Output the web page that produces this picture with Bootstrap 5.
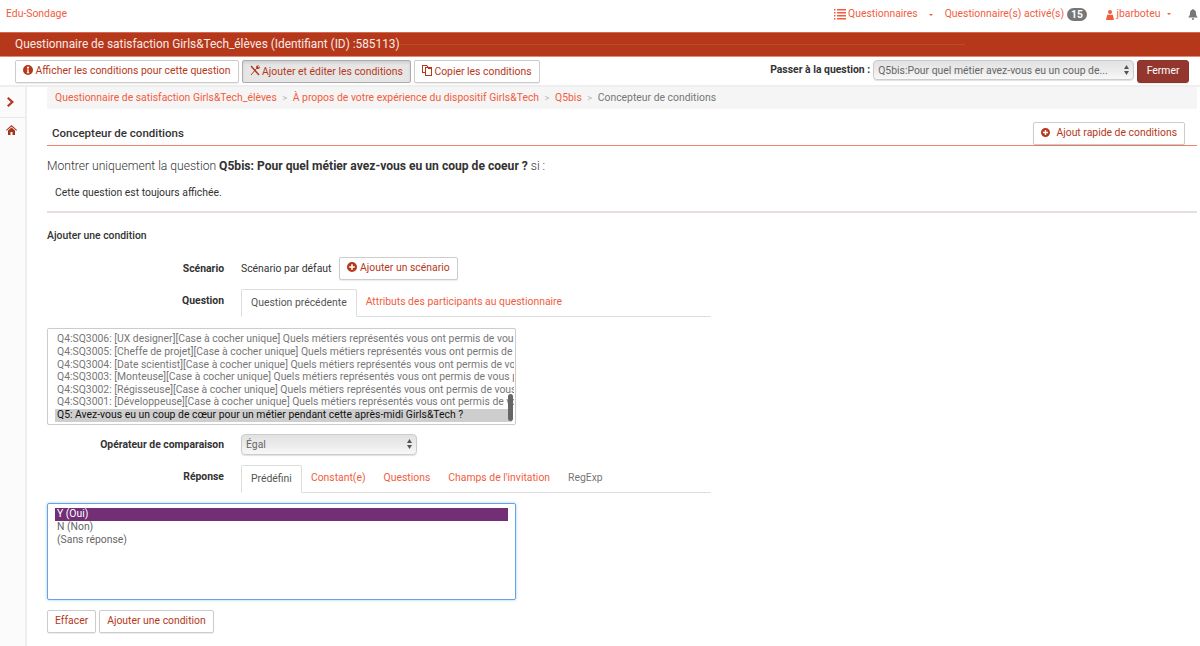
<!DOCTYPE html>
<html lang="fr">
<head>
  <meta charset="UTF-8" />
  <meta name="viewport" content="width=device-width, initial-scale=1.0"/>
  <title>Edu-Sondage - Concepteur de conditions</title>
  <link href="https://cdn.jsdelivr.net/npm/bootstrap@5.3.0/dist/css/bootstrap.min.css" rel="stylesheet"/>
  <style>
    html, body { height: 100%; overflow: hidden; }
    body { font-family: Roboto, "Liberation Sans", sans-serif; font-size: 10.4px; color: #333; background: #fff; line-height: 1.2; }
    a { text-decoration: none; color: #f25c3e; }
    svg { display: inline-block; fill: currentColor; }

    .top-bar { height: 32px; padding: 0 2px 3px 6px; }
    .top-bar a { color: #f25c3e; }
    .top-caret { width: 0; height: 0; border: 2.5px solid transparent; border-top-color: #f25c3e; border-bottom: 0; display: inline-block; vertical-align: 2px; }
    .menu-caret { margin: 0 12px 0 11px; }
    .count-pill { background: #777; color: #fff; font-weight: 700; font-size: 10.4px; border-radius: 7px; padding: 1px 4px; line-height: 11px; margin: 0 19px 0 3px; }
    .bell { color: #777; margin-left: 17px; }

    .title-bar { height: 25px; background: #b5381a; border-top: 1px solid #d9694e; border-bottom: 1px solid #e08a75; color: #fbe9e4; font-size: 11.85px; padding-left: 15px; }
    .title-line { width: 565px; border-top: 1px solid #c04a2c; }

    .tool-bar { height: 30px; padding: 3px 11px 0 15px; border-bottom: 2px solid #eee; }
    .gap-tight { gap: 3px; }
    .edu-btn { font-size: 10.4px; line-height: 12px; padding: 4px 7px; height: 23px; background: #fff; border: 1px solid #ccc; border-radius: 2px; color: #b5381a; white-space: nowrap; box-shadow: 0 1px 1px rgba(0,0,0,.08); }
    .edu-btn:hover { color: #b5381a; border-color: #ccc; }
    .edu-btn.is-on { background: #e6e6e6; border-color: #adadad; box-shadow: inset 0 2px 3px rgba(0,0,0,.1); }
    .edu-btn svg { vertical-align: -1px; }
    .close-btn { background: #93372e; border-color: #8c342a; color: #fff; padding: 4px 8.5px; border-radius: 3px; }
    .close-btn:hover { background: #93372e; color: #fff; }
    .jump-label { font-weight: 700; color: #333; margin-top: 4px; }
    .mac-select { appearance: none; width: 261px; height: 20px; border: 1px solid #ccc; border-radius: 4px; font: 10.4px Roboto, sans-serif; color: #666; padding: 0 14px 0 4px; outline: 0;
      background: linear-gradient(#e2e2e2, #ebebeb 50%, #f8f8f8); box-shadow: 0 1px 1px rgba(0,0,0,.12); display: block; }
    .mac-select.op-select { width: 176px; height: 21px; }
    .select-wrap { position: relative; display: inline-block; }
    .select-arrows { position: absolute; right: 5px; top: 5px; color: #555; pointer-events: none; }

    .main-area { height: 559px; }
    .side-rail { width: 27px; flex: none; border-right: 2px solid #eee; background: #fbfbfb; color: #b5381a; }
    .rail-item { height: 31px; border-bottom: 1px solid #e8e8e8; padding-right: 5px; }
    .rail-home { padding: 7px 3px 0 0; color: #a5341a; }
    .content-col { flex: 1; padding: 0 3px 0 20px; min-width: 0; }

    .crumb-bar { height: 22px; background: #f5f5f5; padding-left: 8px; }
    .crumb-sep { color: #bbb; margin: 0 5.5px; font-size: 9.5px; }
    .crumb-now { color: #777; }

    .page-head { height: 36px; border-bottom: 1px solid #f4836d; padding: 0 12px 0 5px; margin-top: 1px; }
    .page-head h1 { font-size: 11.5px; font-weight: 500; margin: 17px 0 0; color: #333; }
    .quick-btn { padding: 4px 7px; margin-top: 12px; }
    .quick-btn svg { margin-right: 4px; }

    .show-line { font-size: 12.1px; font-weight: 300; margin: 13px 0 0; color: #333; }
    .show-line b { font-weight: 700; }
    .always-line { margin: 13px 0 0 8px; }
    .thin-rule { border-top: 2px solid #e7dfdd; margin: 12px 0 0; opacity: 1; }
    .add-title { font-weight: 500; margin: 17px 0 0; }

    .form-line { display: flex; }
    .line-scenario { margin-top: 15px; }
    .line-question { margin-top: 9px; }
    .line-operator { margin-top: 9px; }
    .line-answer { margin-top: 10px; }
    .form-key { width: 177px; text-align: right; font-weight: 700; flex: none; }
    .tab-key { padding-top: 6px; }
    .form-val { margin-left: 17px; }
    .tab-strip { display: flex; width: 470px; border-bottom: 1px solid #ddd; height: 28px; }
    .tab-strip a { padding: 7px 9px 0; white-space: nowrap; }
    .tab-strip a.tab-on { color: #555; background: #fff; border: 1px solid #ddd; border-bottom: 1px solid #fff; height: 28px; border-radius: 2px 2px 0 0; }
    .tab-strip a.tab-off { color: #777; }

    .pick-box { width: 469px; border: 1px solid #ccc; border-radius: 2px; padding: 4px 3px 0 7px; overflow: hidden; position: relative; color: #777; margin-top: 10px; }
    .pick-box div { white-space: nowrap; height: 12.6px; line-height: 12.6px; padding-left: 2px; overflow: hidden; margin-right: -2px; }
    .q-box { height: 97px; margin-top: 11px; box-shadow: 0 0 1px rgba(0,0,0,.1); }
    .q-box .row-picked { background: #cecece; color: #111; margin-right: 0; }
    .fake-thumb { position: absolute; right: 2px; top: 65px; width: 5px; height: 27px; background: #666; border-radius: 3px; }
    .a-box { height: 97px; border-color: #66a3e0; box-shadow: 0 0 3px rgba(102,163,224,.6); color: #666; }
    .a-box .row-chosen { background: #722f76; color: #fff; margin-right: 4px; }
    .a-box div { margin-right: 4px; }
    .cond-actions { margin-top: 10px; }
  </style>
</head>
<body>

  <!-- top navbar -->
  <nav class="top-bar d-flex align-items-center justify-content-between">
    <a href="#">Edu-Sondage</a>
    <div class="d-flex align-items-center">
      <a href="#">
        <svg width="12" height="11" viewBox="0 0 12 11"><path d="M0 0h1.500v1.500H0zM3 0h9v1.500H3zM0 3h1.500v1.500H0zM3 3h9v1.500H3zM0 6h1.500v1.500H0zM3 6h9v1.500H3zM0 9h1.500v1.500H0zM3 9h9v1.500H3z"/></svg>
        Questionnaires
      </a>
      <span class="top-caret menu-caret"></span>
      <a href="#">Questionnaire(s) activé(s)</a>
      <span class="count-pill">15</span>
      <a href="#">
        <svg width="8" height="10" viewBox="0 0 8 10"><circle cx="4" cy="2" r="2"/><path d="M1.200 4.800h5.600L8 10H0z"/></svg>
        jbarboteu <span class="top-caret ms-1"></span>
      </a>
      <svg class="bell" width="10" height="11" viewBox="0 0 10 11"><path d="M5 0c.5 0 .8.3.8.8C7.500 1.200 8 2.700 8 4.500c0 1.500.6 2.500 1.500 3.500v.6H.5V8C1.400 7 2 6 2 4.500 2 2.700 2.500 1.200 4.200.8 4.200.3 4.500 0 5 0zM3.800 9.200h2.400C6.100 10.200 5.600 11 5 11s-1.100-.8-1.200-1.800z"/></svg>
    </div>
  </nav>

  <!-- survey title -->
  <div class="title-bar d-flex align-items-center">
    <span>Questionnaire de satisfaction Girls&amp;Tech_élèves (Identifiant (ID) :585113)</span>
    <span class="title-line"></span>
  </div>

  <!-- toolbar -->
  <div class="tool-bar d-flex justify-content-between">
    <div class="d-flex gap-tight">
      <a href="#" class="btn edu-btn">
        <svg width="10" height="10" viewBox="0 0 10 10"><path fill-rule="evenodd" d="M5 0a5 5 0 1 1 0 10A5 5 0 0 1 5 0zM4 1.800v1.600h2V1.800zM3.800 4.400v.9h.5v2h-.5v.9h2.400v-.9h-.5V4.400z"/></svg>
        Afficher les conditions pour cette question
      </a>
      <a href="#" class="btn edu-btn is-on">
        <svg width="10" height="11" viewBox="0 0 10 11"><path fill="none" stroke="currentColor" stroke-width="1.500" d="M1 1l8 9"/><path fill="none" stroke="currentColor" stroke-width="1" d="M6.800 3.200 1 10"/><path d="M6 2.500C6 1 7.500 0 9 .4L7.600 1.800l.8.8L9.800 1.300C10.200 3 8.800 4.400 7 4z"/></svg>
        Ajouter et éditer les conditions
      </a>
      <a href="#" class="btn edu-btn">
        <svg width="10" height="11" viewBox="0 0 10 11"><path fill-rule="evenodd" d="M0 0h5l1.500 2H10v9H3V8H0zM1 1v6h2V2h2.200L4.500 1zM4 3v7h5V4H6V3z"/></svg>
        Copier les conditions
      </a>
    </div>
    <div class="d-flex gap-tight align-items-start">
      <span class="jump-label">Passer à la question :</span>
      <span class="select-wrap">
        <select class="mac-select" aria-label="Passer à la question">
          <option>Q5bis:Pour quel métier avez-vous eu un coup de...</option>
        </select>
        <svg class="select-arrows" width="5" height="10" viewBox="0 0 5 10"><path d="M2.500 0 5 4H0zM0 6h5l-2.500 4z"/></svg>
      </span>
      <a href="#" class="btn edu-btn close-btn">Fermer</a>
    </div>
  </div>

  <div class="main-area d-flex">
    <!-- left rail -->
    <div class="side-rail">
      <div class="rail-item d-flex align-items-center justify-content-center">
        <svg width="7" height="10" viewBox="0 0 7 10"><path d="M1.500 0 7 5l-5.500 5L0 8.500 3.800 5 0 1.500z"/></svg>
      </div>
      <div class="rail-home d-flex justify-content-center">
        <svg width="11" height="10" viewBox="0 0 11 10"><path d="M5.500 0 11 5l-.6.700L5.500 1.400.6 5.700 0 5zM2 5.400l3.500-3 3.500 3V10H6.500V7h-2v3H2z"/></svg>
      </div>
    </div>

    <div class="content-col">
      <div class="crumb-bar d-flex align-items-center">
        <a href="#">Questionnaire de satisfaction Girls&amp;Tech_élèves</a>
        <span class="crumb-sep">&gt;</span>
        <a href="#">À propos de votre expérience du dispositif Girls&amp;Tech</a>
        <span class="crumb-sep">&gt;</span>
        <a href="#">Q5bis</a>
        <span class="crumb-sep">&gt;</span>
        <span class="crumb-now">Concepteur de conditions</span>
      </div>

      <div class="page-head d-flex justify-content-between">
        <h1>Concepteur de conditions</h1>
        <a href="#" class="btn edu-btn quick-btn">
          <svg width="9" height="9" viewBox="0 0 10 10"><path fill-rule="evenodd" d="M5 0a5 5 0 1 1 0 10A5 5 0 0 1 5 0zM4.200 2.200v2H2.200v1.600h2v2h1.600v-2h2V4.200h-2v-2z"/></svg>
          Ajout rapide de conditions
        </a>
      </div>

      <p class="show-line">Montrer uniquement la question <b>Q5bis: Pour quel métier avez-vous eu un coup de coeur ?</b> si :</p>
      <p class="always-line">Cette question est toujours affichée.</p>
      <hr class="thin-rule">

      <p class="add-title">Ajouter une condition</p>

      <div class="form-line line-scenario align-items-center">
        <span class="form-key">Scénario</span>
        <span class="form-val">Scénario par défaut</span>
        <a href="#" class="btn edu-btn ms-2">
          <svg width="10" height="10" viewBox="0 0 10 10"><path fill-rule="evenodd" d="M5 0a5 5 0 1 1 0 10A5 5 0 0 1 5 0zM4.200 2.200v2H2.200v1.600h2v2h1.600v-2h2V4.200h-2v-2z"/></svg>
          Ajouter un scénario
        </a>
      </div>

      <div class="form-line line-question">
        <span class="form-key tab-key">Question</span>
        <div class="form-val tab-strip">
          <a href="#" class="tab-on">Question précédente</a>
          <a href="#">Attributs des participants au questionnaire</a>
        </div>
      </div>

      <div class="pick-box q-box">
        <div>Q4:SQ3006: [UX designer][Case à cocher unique] Quels métiers représentés vous ont permis de vous projeter ?</div>
        <div>Q4:SQ3005: [Cheffe de projet][Case à cocher unique] Quels métiers représentés vous ont permis de vous projeter ?</div>
        <div>Q4:SQ3004: [Date scientist][Case à cocher unique] Quels métiers représentés vous ont permis de vous projeter ?</div>
        <div>Q4:SQ3003: [Monteuse][Case à cocher unique] Quels métiers représentés vous ont permis de vous projeter ?</div>
        <div>Q4:SQ3002: [Régisseuse][Case à cocher unique] Quels métiers représentés vous ont permis de vous projeter ?</div>
        <div>Q4:SQ3001: [Développeuse][Case à cocher unique] Quels métiers représentés vous ont permis de vous projeter ?</div>
        <div class="row-picked">Q5: Avez-vous eu un coup de cœur pour un métier pendant cette après-midi Girls&amp;Tech ?</div>
        <span class="fake-thumb"></span>
      </div>

      <div class="form-line line-operator align-items-center">
        <span class="form-key">Opérateur de comparaison</span>
        <span class="form-val select-wrap">
          <select class="mac-select op-select" aria-label="Opérateur de comparaison"><option>Égal</option></select>
          <svg class="select-arrows" width="5" height="10" viewBox="0 0 5 10"><path d="M2.500 0 5 4H0zM0 6h5l-2.500 4z"/></svg>
        </span>
      </div>

      <div class="form-line line-answer">
        <span class="form-key tab-key">Réponse</span>
        <div class="form-val tab-strip">
          <a href="#" class="tab-on">Prédéfini</a>
          <a href="#">Constant(e)</a>
          <a href="#">Questions</a>
          <a href="#">Champs de l'invitation</a>
          <a href="#" class="tab-off">RegExp</a>
        </div>
      </div>

      <div class="pick-box a-box">
        <div class="row-chosen">Y (Oui)</div>
        <div>N (Non)</div>
        <div>(Sans réponse)</div>
      </div>

      <div class="cond-actions d-flex gap-tight">
        <a href="#" class="btn edu-btn">Effacer</a>
        <a href="#" class="btn edu-btn">Ajouter une condition</a>
      </div>
    </div>
  </div>

  <script src="https://cdn.jsdelivr.net/npm/bootstrap@5.3.0/dist/js/bootstrap.bundle.min.js"></script>
</body>
</html>
